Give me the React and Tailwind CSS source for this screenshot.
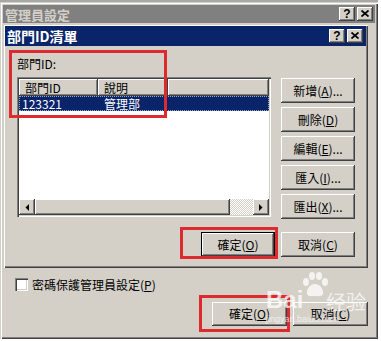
import React from "react";

const raised =
  "shadow-[inset_-1px_-1px_#404040,inset_1px_1px_#ffffff,inset_-2px_-2px_#808080,inset_2px_2px_#d4d0c8]";
const frame =
  "shadow-[inset_1px_1px_#d4d0c8,inset_2px_2px_#ffffff,inset_-1px_-1px_#404040,inset_-2px_-2px_#808080]";
const sunken =
  "shadow-[inset_1px_1px_#808080,inset_2px_2px_#404040,inset_-1px_-1px_#ffffff,inset_-2px_-2px_#d4d0c8]";

function Btn({ children, className = "", def = false }) {
  if (def) {
    return (
      <div className={"border border-black " + className}>
        <div className={"w-full h-full bg-[#d4d0c8] flex items-center justify-center text-[12px] leading-none " + raised}>
          {children}
        </div>
      </div>
    );
  }
  return (
    <div className={"bg-[#d4d0c8] flex items-center justify-center text-[12px] leading-none " + raised + " " + className}>
      {children}
    </div>
  );
}

function CapBtn({ kind }) {
  return (
    <div className={"w-[16px] h-[14px] bg-[#d4d0c8] flex items-center justify-center " + raised}>
      {kind === "help" ? (
        <span className="font-['Liberation_Sans',sans-serif] font-bold text-[12px] leading-none text-black -mt-[1px]">?</span>
      ) : (
        <svg width="8" height="7" viewBox="0 0 8 7" className="-mt-[1px]">
          <path d="M0.5 0.5 L7.5 6.5 M7.5 0.5 L0.5 6.5" stroke="black" strokeWidth="1.7" />
        </svg>
      )}
    </div>
  );
}

function Arrow({ dir }) {
  return (
    <div className={"w-[16px] h-full bg-[#d4d0c8] flex items-center justify-center " + raised}>
      <svg width="4" height="7" viewBox="0 0 4 7">
        {dir === "left" ? (
          <polygon points="4,0 4,7 0.5,3.5" fill="black" />
        ) : (
          <polygon points="0,0 0,7 3.5,3.5" fill="black" />
        )}
      </svg>
    </div>
  );
}

export default function App() {
  return (
    <div className="relative w-[381px] h-[341px] bg-white overflow-hidden text-black font-['Noto_Sans_CJK_TC','Noto_Sans_CJK_SC',sans-serif]">
      <div className="h-[2px] w-[378px] bg-[#a8a8a8]" />
      {/* Outer window */}
      <div className={"w-[378px] h-[337px] bg-[#d4d0c8] p-[3px] flex flex-col " + frame}>
        <div className="h-[18px] bg-[#808080] flex items-center justify-between pl-[2px] pr-[2px]">
          <span className="text-[13px] font-bold leading-none text-[#d4d0c8]">管理員設定</span>
          <div className="flex gap-[2px]">
            <CapBtn kind="help" />
            <CapBtn kind="close" />
          </div>
        </div>

        {/* Inner dialog */}
        <div className={"mt-[1px] w-[365px] h-[244px] bg-[#d4d0c8] p-[2px] flex flex-col " + frame}>
          <div className="h-[20px] bg-[#0a246a] flex items-center justify-between pl-[2px] pr-[3px]">
            <span className="text-[14px] font-bold leading-none text-white">部門ID清單</span>
            <div className="flex gap-[2px]">
              <CapBtn kind="help" />
              <CapBtn kind="close" />
            </div>
          </div>

          <div className="flex pl-[12px] pr-[11px] gap-[10px]">
            <div className="flex flex-col w-[254px]">
              <div className="mt-[10px] h-[16px] leading-[16px] text-[12px]">部門ID:</div>
              <div className={"mt-[5px] w-[254px] h-[140px] bg-white p-[2px] flex flex-col " + sunken}>
                <div className="h-[17px] flex text-[12px] leading-none">
                  <div className={"w-[79px] bg-[#d4d0c8] flex items-center pl-[6px] " + raised}>部門ID</div>
                  <div className={"w-[70px] bg-[#d4d0c8] flex items-center pl-[6px] " + raised}>說明</div>
                  <div className={"flex-1 bg-[#d4d0c8] " + raised} />
                </div>
                <div className="h-[15px] bg-[#0a246a] text-white flex text-[12px] leading-none border border-dotted border-[#9aa6c8]">
                  <div className="w-[79px] flex items-center pl-[2px]">123321</div>
                  <div className="flex items-center pl-[5px]">管理部</div>
                </div>
                <div className="flex-1" />
                <div className="h-[16px] flex">
                  <Arrow dir="left" />
                  <div className={"w-[195px] bg-[#d4d0c8] " + raised} />
                  <div className="flex-1 bg-[image:repeating-conic-gradient(#ffffff_0%_25%,#d4d0c8_0%_50%)] bg-[length:2px_2px]" />
                  <Arrow dir="right" />
                </div>
              </div>
            </div>
            <div className="mt-[32px] flex flex-col gap-[4px] w-[74px]">
              <Btn className="h-[25px]">新增(<u>A</u>)...</Btn>
              <Btn className="h-[25px]">刪除(<u>D</u>)</Btn>
              <Btn className="h-[25px]">編輯(<u>E</u>)...</Btn>
              <Btn className="h-[25px]">匯入(<u>I</u>)...</Btn>
              <Btn className="h-[25px]">匯出(<u>X</u>)...</Btn>
            </div>
          </div>

          <div className="mt-[13px] flex justify-end gap-[6px] pr-[11px]">
            <Btn def className="w-[74px] h-[25px]">確定(<u>O</u>)</Btn>
            <Btn className="w-[74px] h-[25px]">取消(<u>C</u>)</Btn>
          </div>
        </div>

        {/* Outer content */}
        <div className="mt-[10px] pl-[12px] flex items-center gap-[4px] h-[13px]">
          <div className={"w-[13px] h-[13px] bg-white " + sunken} />
          <span className="text-[12px] leading-none">密碼保護管理員設定(<u>P</u>)</span>
        </div>
        <div className="mt-[11px] flex justify-end gap-[6px] pr-[7px]">
          <Btn className="w-[75px] h-[24px]">確定(<u>O</u>)</Btn>
          <Btn className="w-[75px] h-[24px]">取消(<u>C</u>)</Btn>
        </div>
      </div>

      {/* Annotation boxes */}
      <div className="absolute left-[9px] top-[50px] w-[158px] h-[68px] border-[3px] border-[#dc2a2e]" />
      <div className="absolute left-[180px] top-[227px] w-[98px] h-[32px] border-[3px] border-[#dc2a2e]" />
      <div className="absolute left-[199px] top-[295px] w-[91px] h-[37px] border-[3px] border-[#dc2a2e]" />

      {/* Watermark */}
      <div className="absolute left-[262px] top-[270px] w-[110px] h-[60px] pointer-events-none">
        <svg className="absolute left-[38px] top-[2px]" width="30" height="26" viewBox="0 0 30 26">
          <g fill="#ffffff" fillOpacity="0.75">
            <ellipse cx="6" cy="10" rx="3" ry="4" />
            <ellipse cx="12" cy="4" rx="3" ry="4" />
            <ellipse cx="19" cy="4" rx="3" ry="4" />
            <ellipse cx="25" cy="10" rx="3" ry="4" />
            <path d="M15 12 C9 12 6 19 7 22 C8 25 12 24 15 24 C18 24 22 25 23 22 C24 19 21 12 15 12 Z" />
          </g>
        </svg>
        <span className="absolute left-[4px] top-[18px] font-['Liberation_Sans',sans-serif] font-bold text-[24px] leading-none text-white/75">Bai</span>
        <span className="absolute left-[64px] top-[22px] font-['Noto_Sans_CJK_SC',sans-serif] text-[20px] leading-none text-white/70">经验</span>
        <span className="absolute left-[4px] top-[45px] font-['Liberation_Sans',sans-serif] text-[9px] leading-none text-white/70">jingyan.baidu.com</span>
      </div>
    </div>
  );
}
